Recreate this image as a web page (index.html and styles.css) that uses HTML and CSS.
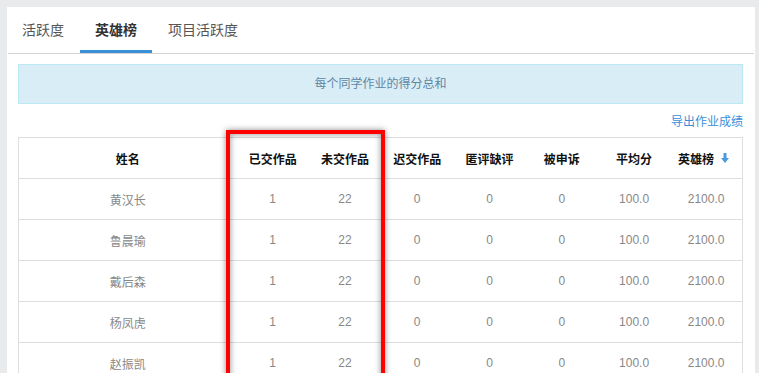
FILE: index.html
```html
<!DOCTYPE html>
<html lang="zh-CN">
<head>
<meta charset="utf-8">
<title>英雄榜</title>
<link rel="stylesheet" href="styles.css">
</head>
<body>
<div class="panel">
  <ul class="tabs">
    <li class="tab">活跃度</li>
    <li class="tab active">英雄榜</li>
    <li class="tab">项目活跃度</li>
  </ul>
  <div class="content">
    <div class="info">每个同学作业的得分总和</div>
    <div class="export-row"><a class="export" href="#">导出作业成绩</a></div>
    <div class="table-wrap">
      <table class="rank">
        <colgroup>
          <col class="col-name">
          <col><col><col><col><col><col><col>
        </colgroup>
        <thead>
          <tr>
            <th>姓名</th>
            <th>已交作品</th>
            <th>未交作品</th>
            <th>迟交作品</th>
            <th>匿评缺评</th>
            <th>被申诉</th>
            <th>平均分</th>
            <th><span class="sort">英雄榜<svg class="arrow" width="8" height="10" viewBox="0 0 8 10"><path d="M2.5 0h3v5H8L4 10 0 5h2.5z" fill="#4a9ae0"/></svg></span></th>
          </tr>
        </thead>
        <tbody>
          <tr><td>黄汉长</td><td>1</td><td>22</td><td>0</td><td>0</td><td>0</td><td>100.0</td><td>2100.0</td></tr>
          <tr><td>鲁晨瑜</td><td>1</td><td>22</td><td>0</td><td>0</td><td>0</td><td>100.0</td><td>2100.0</td></tr>
          <tr><td>戴后森</td><td>1</td><td>22</td><td>0</td><td>0</td><td>0</td><td>100.0</td><td>2100.0</td></tr>
          <tr><td>杨凤虎</td><td>1</td><td>22</td><td>0</td><td>0</td><td>0</td><td>100.0</td><td>2100.0</td></tr>
          <tr><td>赵振凯</td><td>1</td><td>22</td><td>0</td><td>0</td><td>0</td><td>100.0</td><td>2100.0</td></tr>
        </tbody>
      </table>
      <div class="highlight"></div>
    </div>
  </div>
</div>
</body>
</html>
```
FILE: styles.css
```css
html, body {
  margin: 0;
  padding: 0;
  height: 373px;
  overflow: hidden;
}
body {
  background: #e9eaec;
  font-family: "Liberation Sans", "Noto Sans CJK SC", sans-serif;
  font-size: 12px;
  color: #333;
}
.panel {
  margin: 7px 4px 0 7px;
  background: #fff;
  height: 400px;
}
.tabs {
  list-style: none;
  margin: 0 1px 0 1px;
  padding: 0;
  display: flex;
  border-bottom: 1px solid #d4d4d4;
}
.tab {
  padding: 13px 15px 10px;
  line-height: 20px;
  font-size: 14px;
  color: #555;
  border-bottom: 3px solid transparent;
  margin-right: 1px;
}
.tab:first-child {
  padding-left: 14px;
}
.tab.active {
  color: #333;
  font-weight: bold;
  border-bottom-color: #3a8fd9;
}
.content {
  padding: 10px 12px 0 11px;
}
.info {
  background: #d9edf7;
  border: 1px solid #bce8f1;
  height: 38px;
  line-height: 38px;
  text-align: center;
  color: #5f86a3;
  font-size: 12px;
}
.export-row {
  display: flex;
  justify-content: flex-end;
  padding: 8px 0 5px;
  line-height: 20px;
}
.export {
  color: #3a8fd9;
  text-decoration: none;
  font-size: 12px;
}
.table-wrap {
  position: relative;
}
.rank {
  width: 100%;
  border-collapse: collapse;
  table-layout: fixed;
  border: 1px solid #dedede;
}
.col-name {
  width: 218px;
}
.rank th, .rank td {
  height: 40px;
  padding: 0;
  text-align: center;
  border-top: 1px solid #dedede;
  vertical-align: middle;
}
.rank th {
  font-weight: bold;
  color: #111;
  font-size: 12px;
}
.rank td {
  color: #888;
  font-size: 12px;
}
.sort {
  display: inline-flex;
  align-items: center;
  gap: 7px;
  padding-right: 5px;
}
.arrow {
  display: block;
}
.highlight {
  position: absolute;
  left: 208px;
  top: -7px;
  width: 151px;
  height: 300px;
  border: 4px solid #ff0000;
  box-shadow: 0 0 6px rgba(0, 0, 0, 0.45), inset 0 0 6px rgba(0, 0, 0, 0.45);
  pointer-events: none;
}
```
